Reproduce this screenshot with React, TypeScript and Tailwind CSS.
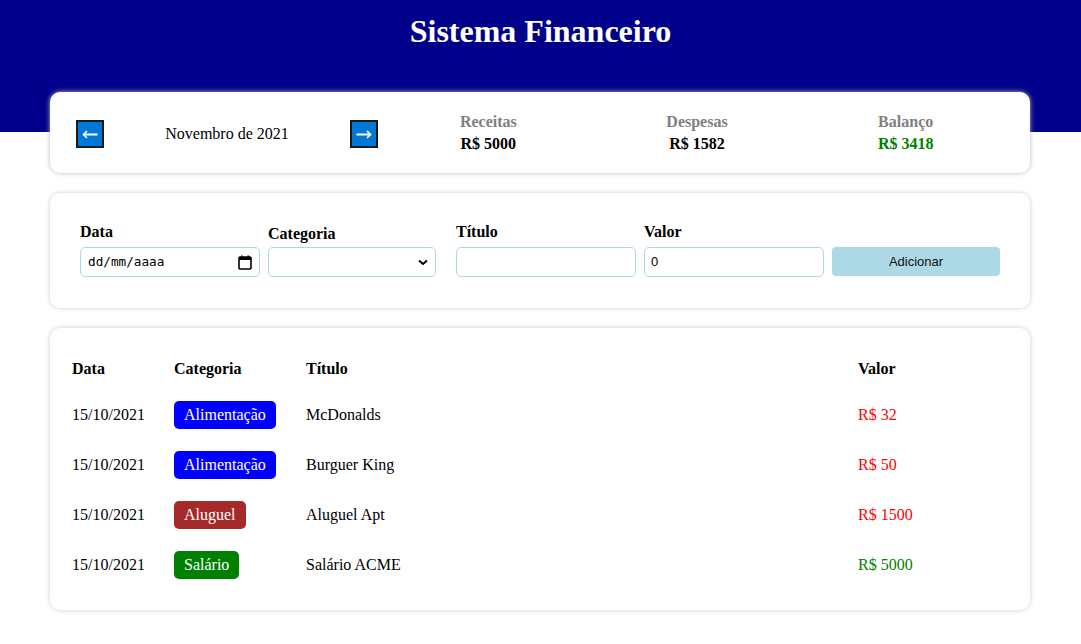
import React from "react";

type Item = {
    date: string;
    category: string;
    title: string;
    value: number;
    expense: boolean;
};

const items: Item[] = [
    { date: "15/10/2021", category: "Alimentação", title: "McDonalds", value: 32, expense: true },
    { date: "15/10/2021", category: "Alimentação", title: "Burguer King", value: 50, expense: true },
    { date: "15/10/2021", category: "Aluguel", title: "Aluguel Apt", value: 1500, expense: true },
    { date: "15/10/2021", category: "Salário", title: "Salário ACME", value: 5000, expense: false },
];

const categoryColors: Record<string, string> = {
    "Alimentação": "bg-[#0000ff]",
    Aluguel: "bg-[#a52a2a]",
    "Salário": "bg-[#008000]",
};

function ResumeItem({ title, value, color }: { title: string; value: number; color?: string }) {
    return (
        <div className="flex-1 flex flex-col items-center">
            <div className="font-bold text-[#808080] leading-[22px]">{title}</div>
            <div className={`font-bold leading-[22px] ${color ?? "text-black"}`}>R$ {value}</div>
        </div>
    );
}

function ArrowButton({ left }: { left?: boolean }) {
    return (
        <button className="w-[28px] h-[28px] shrink-0 bg-[#0078d7] border-2 border-[#1a1a1a] flex items-center justify-center cursor-pointer">
            <svg width="16" height="9" viewBox="0 0 16 9" className={left ? "" : "rotate-180"}>
                <path d="M1.5 4.5 H15.5" stroke="#fff" strokeWidth="2" />
                <path d="M5 1 L1.5 4.5 L5 8" fill="none" stroke="#fff" strokeWidth="1.6" />
            </svg>
        </button>
    );
}

export default function App() {
    return (
        <div className="min-h-[644px] bg-white text-black font-['Liberation_Serif','Times_New_Roman',serif] text-[16px]">
            <div className="h-[132px] bg-[#00008b] pt-[12px]">
                <h1 className="text-white text-[32px] font-bold text-center leading-[38px]">
                    Sistema Financeiro
                </h1>
            </div>

            <div className="w-[980px] ml-[50px] -mt-[40px] flex flex-col gap-[20px] pb-[20px]">
                {/* info area */}
                <div className="bg-white rounded-[10px] shadow-[0_0_5px_#bbb] h-[81px] px-[20px] flex items-center">
                    <div className="w-[314px] shrink-0 flex items-center justify-between px-[6px] pt-[3px]">
                        <ArrowButton left />
                        <div>Novembro de 2021</div>
                        <ArrowButton />
                    </div>
                    <div className="flex-1 flex">
                        <ResumeItem title="Receitas" value={5000} />
                        <ResumeItem title="Despesas" value={1582} />
                        <ResumeItem title="Balanço" value={3418} color="text-[#008000]" />
                    </div>
                </div>

                {/* input area */}
                <div className="bg-white rounded-[10px] shadow-[0_0_5px_#ccc] px-[30px] pt-[30px] pb-[31px] flex items-end">
                    <div className="w-[180px] mr-[8px]">
                        <div className="font-bold leading-[18px] mb-[6px]">Data</div>
                        <div className="h-[30px] border border-[#add8e6] rounded-[5px] flex items-center justify-between px-[7px]">
                            <span className="font-['DejaVu_Sans_Mono',monospace] text-[12.7px] text-black">dd/mm/aaaa</span>
                            <svg width="14" height="15" viewBox="0 0 14 15">
                                <rect x="1" y="2" width="12" height="12" rx="1" fill="none" stroke="#000" strokeWidth="1.6" />
                                <rect x="1" y="2" width="12" height="3" fill="#000" />
                                <rect x="3" y="0.5" width="1.6" height="3" fill="#000" />
                                <rect x="9.4" y="0.5" width="1.6" height="3" fill="#000" />
                            </svg>
                        </div>
                    </div>
                    <div className="w-[168px] mr-[20px]">
                        <div className="font-bold leading-[18px] mb-[4px]">Categoria</div>
                        <div className="h-[30px] border border-[#add8e6] rounded-[5px] flex items-center justify-end px-[7px]">
                            <svg width="10" height="7" viewBox="0 0 10 7">
                                <path d="M1 1.5 L5 5 L9 1.5" fill="none" stroke="#000" strokeWidth="2" />
                            </svg>
                        </div>
                    </div>
                    <div className="w-[180px] mr-[8px]">
                        <div className="font-bold leading-[18px] mb-[6px]">Título</div>
                        <div className="h-[30px] border border-[#add8e6] rounded-[5px]"></div>
                    </div>
                    <div className="w-[180px] mr-[8px]">
                        <div className="font-bold leading-[18px] mb-[6px]">Valor</div>
                        <div className="h-[30px] border border-[#add8e6] rounded-[5px] flex items-center px-[6px] font-['Liberation_Sans',Arial,sans-serif] text-[13px]">
                            0
                        </div>
                    </div>
                    <button className="w-[168px] h-[29px] mb-[1px] bg-[#add8e6] rounded-[4px] font-['Liberation_Sans',Arial,sans-serif] text-[13px] text-[#111] cursor-pointer">
                        Adicionar
                    </button>
                </div>

                {/* table area */}
                <div className="bg-white rounded-[10px] shadow-[0_0_5px_#ccc] px-[22px] py-[20px]">
                    <div className="grid grid-cols-[102px_132px_552px_1fr] h-[42px] items-center font-bold">
                        <div>Data</div>
                        <div>Categoria</div>
                        <div>Título</div>
                        <div>Valor</div>
                    </div>
                    {items.map((item, index) => (
                        <div key={index} className="grid grid-cols-[102px_132px_552px_1fr] h-[50px] items-center">
                            <div>{item.date}</div>
                            <div>
                                <span className={`inline-block ${categoryColors[item.category]} text-white px-[10px] h-[28px] leading-[28px] rounded-[5px]`}>
                                    {item.category}
                                </span>
                            </div>
                            <div>{item.title}</div>
                            <div className={item.expense ? "text-[#ff0000]" : "text-[#008000]"}>
                                R$ {item.value}
                            </div>
                        </div>
                    ))}
                </div>
            </div>
        </div>
    );
}
